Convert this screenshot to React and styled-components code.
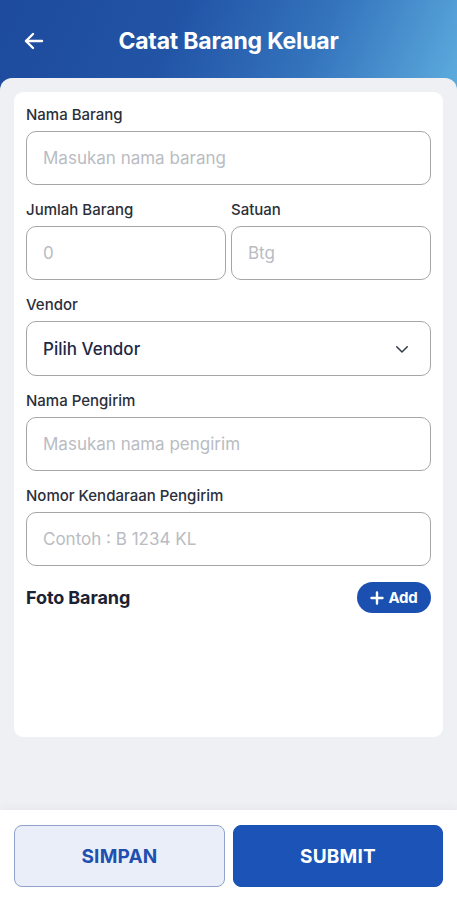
import React from "react";
import styled, { createGlobalStyle } from "styled-components";

const Global = createGlobalStyle`
  html, body { margin: 0; padding: 0; }
  body { font-family: Inter, "Noto Sans", "Liberation Sans", sans-serif; background: #ffffff; }
  * { box-sizing: border-box; }
`;

const Page = styled.div`
  width: 457px;
  min-height: 900px;
  display: flex;
  flex-direction: column;
`;

const Header = styled.header`
  height: 90px;
  padding-bottom: 8px;
  display: grid;
  grid-template-columns: 70px 1fr 70px;
  align-items: center;
  background: linear-gradient(115deg, #1d4a9c 0%, #2254a6 38%, #3474bd 68%, #5dacde 100%);
`;

const Back = styled.button`
  border: 0;
  background: none;
  padding: 0 0 0 22px;
  display: flex;
  align-items: center;
  cursor: pointer;
`;

const Title = styled.h1`
  margin: 0;
  text-align: center;
  color: #ffffff;
  font-size: 23px;
  font-weight: 700;
  letter-spacing: -0.2px;
`;

const Panel = styled.main`
  position: relative;
  margin-top: -12px;
  flex: 1;
  background: #eef0f3;
  border-radius: 12px 12px 0 0;
  padding: 14px;
`;

const Card = styled.section`
  background: #ffffff;
  border-radius: 9px;
  min-height: 645px;
  padding: 14px 12px;
  display: flex;
  flex-direction: column;
  gap: 16px;
`;

const Field = styled.div`
  display: flex;
  flex-direction: column;
  gap: 7px;
`;

const Row = styled.div`
  display: grid;
  grid-template-columns: 1fr 1fr;
  gap: 5px;
`;

const Label = styled.label`
  font-size: 15px;
  line-height: 18px;
  color: #2a2f3a;
  font-weight: 500;
  letter-spacing: 0;
`;

const Input = styled.input`
  height: 54px;
  width: 100%;
  border: 1px solid #a4a6aa;
  border-radius: 10px;
  padding: 0 16px;
  font-family: inherit;
  font-size: 17px;
  letter-spacing: 0;
  color: #1e2946;
  background: #fff;
  outline: none;
  &::placeholder { color: #b9bcc3; }
`;

const Select = styled.div`
  height: 55px;
  border: 1px solid #a4a6aa;
  border-radius: 10px;
  padding: 0 19px 0 16px;
  display: flex;
  align-items: center;
  justify-content: space-between;
  font-size: 17px;
  font-weight: 500;
  color: #1e2946;
`;

const PhotoRow = styled.div`
  display: flex;
  align-items: center;
  justify-content: space-between;
`;

const PhotoTitle = styled.h2`
  margin: 0;
  font-size: 18px;
  font-weight: 700;
  color: #1b2233;
  letter-spacing: -0.1px;
`;

const AddButton = styled.button`
  height: 31px;
  width: 74px;
  border: 0;
  border-radius: 16px;
  background: #1b50b1;
  color: #fff;
  font-family: inherit;
  font-size: 15px;
  font-weight: 700;
  display: flex;
  align-items: center;
  justify-content: center;
  gap: 4px;
  letter-spacing: -0.2px;
`;

const BottomBar = styled.footer`
  height: 90px;
  background: #ffffff;
  padding: 15px 14px 13px;
  display: grid;
  grid-template-columns: 211px 210px;
  gap: 8px;
  box-shadow: 0 -3px 8px rgba(0, 0, 0, 0.03);
  position: relative;
`;

const ActionButton = styled.button`
  height: 62px;
  border-radius: 8px;
  font-family: inherit;
  font-size: 19px;
  font-weight: 700;
  letter-spacing: 0.2px;
  border: 1px solid ${p => (p.$primary ? "#1a52b5" : "#8fa3cc")};
  background: ${p => (p.$primary ? "#1b54b6" : "#e9eef9")};
  color: ${p => (p.$primary ? "#ffffff" : "#1f50b0")};
`;

const Arrow = () => (
  <svg width="24" height="24" viewBox="0 0 24 24" fill="none" stroke="#fff" strokeWidth="2.4" strokeLinecap="round" strokeLinejoin="round">
    <path d="M20 12H4" />
    <path d="M11 5l-7 7 7 7" />
  </svg>
);

const Chevron = () => (
  <svg width="18" height="18" viewBox="0 0 24 24" fill="none" stroke="#333a48" strokeWidth="2" strokeLinecap="round" strokeLinejoin="round">
    <path d="M5 9l7 7 7-7" />
  </svg>
);

const Plus = () => (
  <svg width="14" height="14" viewBox="0 0 14 14" fill="none" stroke="#fff" strokeWidth="2.4" strokeLinecap="round">
    <path d="M7 1.5v11M1.5 7h11" />
  </svg>
);

export default function App() {
  return (
    <Page>
      <Global />
      <Header>
        <Back aria-label="Kembali"><Arrow /></Back>
        <Title>Catat Barang Keluar</Title>
        <span />
      </Header>
      <Panel>
        <Card>
          <Field>
            <Label>Nama Barang</Label>
            <Input placeholder="Masukan nama barang" />
          </Field>
          <Row>
            <Field>
              <Label>Jumlah Barang</Label>
              <Input placeholder="0" />
            </Field>
            <Field>
              <Label>Satuan</Label>
              <Input placeholder="Btg" />
            </Field>
          </Row>
          <Field>
            <Label>Vendor</Label>
            <Select>
              <span>Pilih Vendor</span>
              <Chevron />
            </Select>
          </Field>
          <Field>
            <Label>Nama Pengirim</Label>
            <Input placeholder="Masukan nama pengirim" />
          </Field>
          <Field>
            <Label>Nomor Kendaraan Pengirim</Label>
            <Input placeholder="Contoh : B 1234 KL" />
          </Field>
          <PhotoRow>
            <PhotoTitle>Foto Barang</PhotoTitle>
            <AddButton><Plus />Add</AddButton>
          </PhotoRow>
        </Card>
      </Panel>
      <BottomBar>
        <ActionButton>SIMPAN</ActionButton>
        <ActionButton $primary>SUBMIT</ActionButton>
      </BottomBar>
    </Page>
  );
}
